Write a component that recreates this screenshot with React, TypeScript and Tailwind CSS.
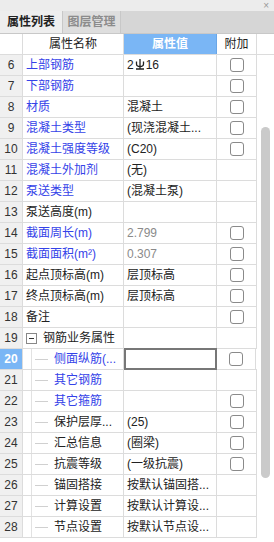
import React from "react";

type Row = {
  n: number;
  name: string;
  value?: React.ReactNode;
  blue?: boolean;
  gray?: boolean;
  check?: boolean;
  group?: boolean;
  child?: boolean;
  selected?: boolean;
};

function RebarGlyph() {
  return (
    <svg width="10" height="12" viewBox="0 0 10 12" className="inline-block mx-[1px] -mt-[2px]">
      <path d="M5 1v10M1.5 3.5v2.5a3.5 2.5 0 0 0 7 0V3.5M1 11h8" stroke="#222" strokeWidth="1.3" fill="none" />
    </svg>
  );
}

const rows: Row[] = [
  { n: 6, name: "上部钢筋", blue: true, value: <>2<RebarGlyph />16</>, check: true },
  { n: 7, name: "下部钢筋", blue: true, check: true },
  { n: 8, name: "材质", blue: true, value: "混凝土", check: true },
  { n: 9, name: "混凝土类型", blue: true, value: "(现浇混凝土...", check: true },
  { n: 10, name: "混凝土强度等级", blue: true, value: "(C20)", check: true },
  { n: 11, name: "混凝土外加剂", blue: true, value: "(无)" },
  { n: 12, name: "泵送类型", blue: true, value: "(混凝土泵)" },
  { n: 13, name: "泵送高度(m)" },
  { n: 14, name: "截面周长(m)", blue: true, value: "2.799", gray: true, check: true },
  { n: 15, name: "截面面积(m²)", blue: true, value: "0.307", gray: true, check: true },
  { n: 16, name: "起点顶标高(m)", value: "层顶标高", check: true },
  { n: 17, name: "终点顶标高(m)", value: "层顶标高", check: true },
  { n: 18, name: "备注", check: true },
  { n: 19, name: "钢筋业务属性", group: true },
  { n: 20, name: "侧面纵筋(...", blue: true, child: true, selected: true, check: true },
  { n: 21, name: "其它钢筋", blue: true, child: true },
  { n: 22, name: "其它箍筋", blue: true, child: true, check: true },
  { n: 23, name: "保护层厚...", child: true, value: "(25)", check: true },
  { n: 24, name: "汇总信息", child: true, value: "(圈梁)", check: true },
  { n: 25, name: "抗震等级", child: true, value: "(一级抗震)", check: true },
  { n: 26, name: "锚固搭接", child: true, value: "按默认锚固搭..." },
  { n: 27, name: "计算设置", child: true, value: "按默认计算设..." },
  { n: 28, name: "节点设置", child: true, value: "按默认节点设..." },
];

function Checkbox() {
  return <div className="w-[14px] h-[14px] border-[1.5px] border-[#8a8a8a] rounded-[3px] bg-white" />;
}

function NameCell({ row }: { row: Row }) {
  const color = row.blue ? "text-[#3442e8]" : "text-[#222]";
  if (row.group) {
    return (
      <div className="flex items-center h-full pl-[3px] border-r border-[#dcdcdc]">
        <div className="w-[11px] h-[11px] border border-[#888] flex items-center justify-center">
          <div className="w-[5px] h-px bg-[#333]" />
        </div>
        <span className="ml-[6px] text-[#222]">{row.name}</span>
      </div>
    );
  }
  if (row.child) {
    return (
      <div className="flex items-center h-full border-r border-[#dcdcdc]">
        <div className="w-[9px] h-full border-r border-[#e2e2e2]" />
        <div className="w-[13px] h-px bg-[#d0d0d0] ml-[3px]" />
        <span className={`ml-[6px] whitespace-nowrap ${color}`}>{row.name}</span>
      </div>
    );
  }
  return (
    <div className={`flex items-center h-full pl-[3px] border-r border-[#dcdcdc] whitespace-nowrap ${color}`}>
      {row.name}
    </div>
  );
}

export default function App() {
  return (
    <div
      className="w-[274px] h-[542px] bg-[#f0f0f0] flex flex-col overflow-hidden text-[12px] leading-none"
      style={{ fontFamily: '"Liberation Sans", "Noto Sans CJK SC", sans-serif' }}
    >
      {/* title strip */}
      <div className="h-[11px] bg-[#ececec] flex justify-end items-center pr-[5px]">
        <span className="text-[10px] text-[#999] leading-none">×</span>
      </div>

      {/* tabs */}
      <div className="h-[23px] bg-[#d6d6d6] flex items-end border-b border-[#c8c8c8]">
        <div className="w-[63px] h-[22px] bg-[#eeeeee] flex items-center justify-center font-bold text-[#222] border-r border-[#c8c8c8]">
          属性列表
        </div>
        <div className="w-[58px] h-[22px] bg-[#dedede] flex items-center justify-center font-bold text-[#8c8c8c] border-r border-[#c8c8c8]">
          图层管理
        </div>
      </div>

      {/* header */}
      <div className="flex h-[21px] bg-white border-b border-[#dcdcdc]">
        <div className="w-[23px] border-r border-[#dcdcdc]" />
        <div className="w-[101px] flex items-center justify-center text-[#222] border-r border-[#dcdcdc]">属性名称</div>
        <div className="w-[93px] flex items-center justify-center text-white font-bold bg-[#7ab6f5] border-r border-[#6aa6e6]">
          属性值
        </div>
        <div className="w-[40px] flex items-center justify-center text-[#222] border-r border-[#dcdcdc]">附加</div>
        <div className="flex-1" />
      </div>

      {/* body */}
      <div className="flex flex-1 bg-white">
        <div className="flex flex-col">
          {rows.map((row) => (
            <div key={row.n} className="flex h-[21px] border-b border-[#dcdcdc]">
              <div
                className={`w-[23px] flex items-center justify-center border-r border-[#dcdcdc] ${
                  row.selected ? "bg-[#7ab6f5] text-white font-bold" : "bg-[#f0f0f0] text-[#333]"
                }`}
              >
                {row.n}
              </div>
              <div className="w-[101px]">
                <NameCell row={row} />
              </div>
              {row.selected ? (
                <div className="w-[93px] -my-px -mr-px h-[22px] border-2 border-[#777] bg-white" />
              ) : (
                <div
                  className={`w-[93px] flex items-center pl-[3px] whitespace-nowrap overflow-hidden border-r border-[#dcdcdc] ${
                    row.gray ? "text-[#8a8a8a]" : "text-[#222]"
                  }`}
                >
                  {row.value}
                </div>
              )}
              <div className="w-[40px] flex items-center justify-center border-r border-[#dcdcdc]">
                {row.check && <Checkbox />}
              </div>
            </div>
          ))}
        </div>
        {/* scrollbar */}
        <div className="flex-1 pt-[72px] pl-[4px]">
          <div className="w-[9px] h-[351px] rounded-full bg-[#cacaca]" />
        </div>
      </div>
    </div>
  );
}
